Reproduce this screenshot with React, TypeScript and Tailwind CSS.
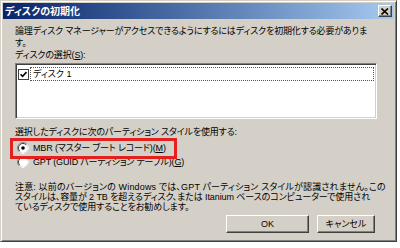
import React from "react";

function Radio({ checked }: { checked?: boolean }) {
  return (
    <svg width="12" height="12" viewBox="0 0 12 12" className="shrink-0">
      <circle cx="6" cy="6" r="5.5" fill="#ffffff" stroke="#808080" />
      <path d="M2.1 9.9A5.5 5.5 0 0 0 9.9 2.1" fill="none" stroke="#ffffff" />
      <path d="M2.8 9.2A4.5 4.5 0 0 1 9.2 2.8" fill="none" stroke="#404040" />
      {checked && <circle cx="6" cy="6" r="1.8" fill="#000000" />}
    </svg>
  );
}

function Button({ w, children }: { w: string; children: React.ReactNode }) {
  return (
    <div
      className={`${w} h-[18px] flex items-center justify-center border border-t-white border-l-white border-r-[#404040] border-b-[#404040] shadow-[inset_-1px_-1px_0_#808080] text-[9px] leading-none`}
    >
      {children}
    </div>
  );
}

export default function App() {
  return (
    <div className="w-[400px] h-[248px] bg-white text-black font-['Liberation_Sans','Noto_Sans_CJK_JP',sans-serif] [font-feature-settings:'palt']">
      <div className="relative w-[397px] h-[242px] bg-[#d4d0c8] border border-t-[#d4d0c8] border-l-[#d4d0c8] border-r-[#404040] border-b-[#404040] shadow-[inset_1px_1px_0_#ffffff,inset_-1px_-1px_0_#808080] p-[2px] flex flex-col">
        {/* title bar */}
        <div className="h-[16px] shrink-0 bg-linear-to-r from-[#0a246a] to-[#a6caf0] flex items-center justify-between pl-[2px] pr-[2px]">
          <span className="text-white font-bold text-[10px] leading-none font-['Noto_Sans_CJK_JP',sans-serif]">
            ディスクの初期化
          </span>
          <div className="w-[14px] h-[12px] bg-[#d4d0c8] border border-t-white border-l-white border-r-[#404040] border-b-[#404040] shadow-[inset_-1px_-1px_0_#808080] flex items-center justify-center">
            <svg width="8" height="7" viewBox="0 0 8 7">
              <path d="M0.5 0.5L7 6.5M7 0.5L0.5 6.5" stroke="#000" strokeWidth="1.6" />
            </svg>
          </div>
        </div>

        {/* content */}
        <div className="flex flex-col pl-[12px] pt-[6px] text-[9px]">
          <p className="leading-[12px] whitespace-nowrap tracking-[-0.15px]">
            論理ディスク マネージャーがアクセスできるようにするにはディスクを初期化する必要がありま
            <br />
            す。
          </p>
          <p className="leading-[12px] whitespace-nowrap tracking-[-0.15px]">
            ディスクの選択(<span className="underline">S</span>):
          </p>

          {/* listbox */}
          <div className="mt-[2px] w-[362px] h-[56px] bg-white border border-t-[#808080] border-l-[#808080] border-r-white border-b-white shadow-[inset_1px_1px_0_#404040,inset_-1px_-1px_0_#d4d0c8] p-[2px]">
            <div className="flex items-center h-[14px] mt-[1px]">
              <div className="w-[11px] h-[11px] shrink-0 bg-white border border-[#404040] flex items-center justify-center">
                <svg width="7" height="7" viewBox="0 0 7 7">
                  <path d="M0.5 3.2L2.6 5.4L6.5 1" fill="none" stroke="#000" strokeWidth="1.6" />
                </svg>
              </div>
              <div className="ml-[1px] flex-1 h-[14px] border border-dotted border-[#555] flex items-center pl-[2px] leading-none">
                ディスク 1
              </div>
            </div>
          </div>

          <p className="mt-[7px] leading-[12px] whitespace-nowrap tracking-[-0.15px]">
            選択したディスクに次のパーティション スタイルを使用する:
          </p>

          <div className="mt-[3px] h-[14px] flex items-center gap-[4px] pl-[2px] whitespace-nowrap tracking-[-0.15px]">
            <Radio checked />
            <span className="leading-none">
              MBR (マスター ブート レコード)(<span className="underline">M</span>)
            </span>
          </div>
          <div className="h-[14px] flex items-center gap-[4px] pl-[2px] whitespace-nowrap tracking-[-0.15px]">
            <Radio />
            <span className="leading-none">
              GPT (GUID パーティション テーブル)(<span className="underline">G</span>)
            </span>
          </div>

          <p className="mt-[13px] leading-[10px] whitespace-nowrap tracking-[-0.1px]">
            <span className="tracking-[0.15px]">
              注意: 以前のバージョンの Windows では、GPT パーティション スタイルが認識されません。この
            </span>
            <br />
            スタイルは、容量が 2 TB を超えるディスク、または Itanium ベースのコンピューターで使用され
            <br />
            ているディスクで使用することをお勧めします。
          </p>

          <div className="mt-[3px] mr-[19px] flex justify-end gap-[8px]">
            <Button w="w-[83px]">OK</Button>
            <Button w="w-[58px]">キャンセル</Button>
          </div>
        </div>

        {/* red annotation box */}
        <div className="absolute left-[9px] top-[137px] w-[167px] h-[21px] border-[3px] border-[#e3201e] pointer-events-none" />
      </div>
    </div>
  );
}
